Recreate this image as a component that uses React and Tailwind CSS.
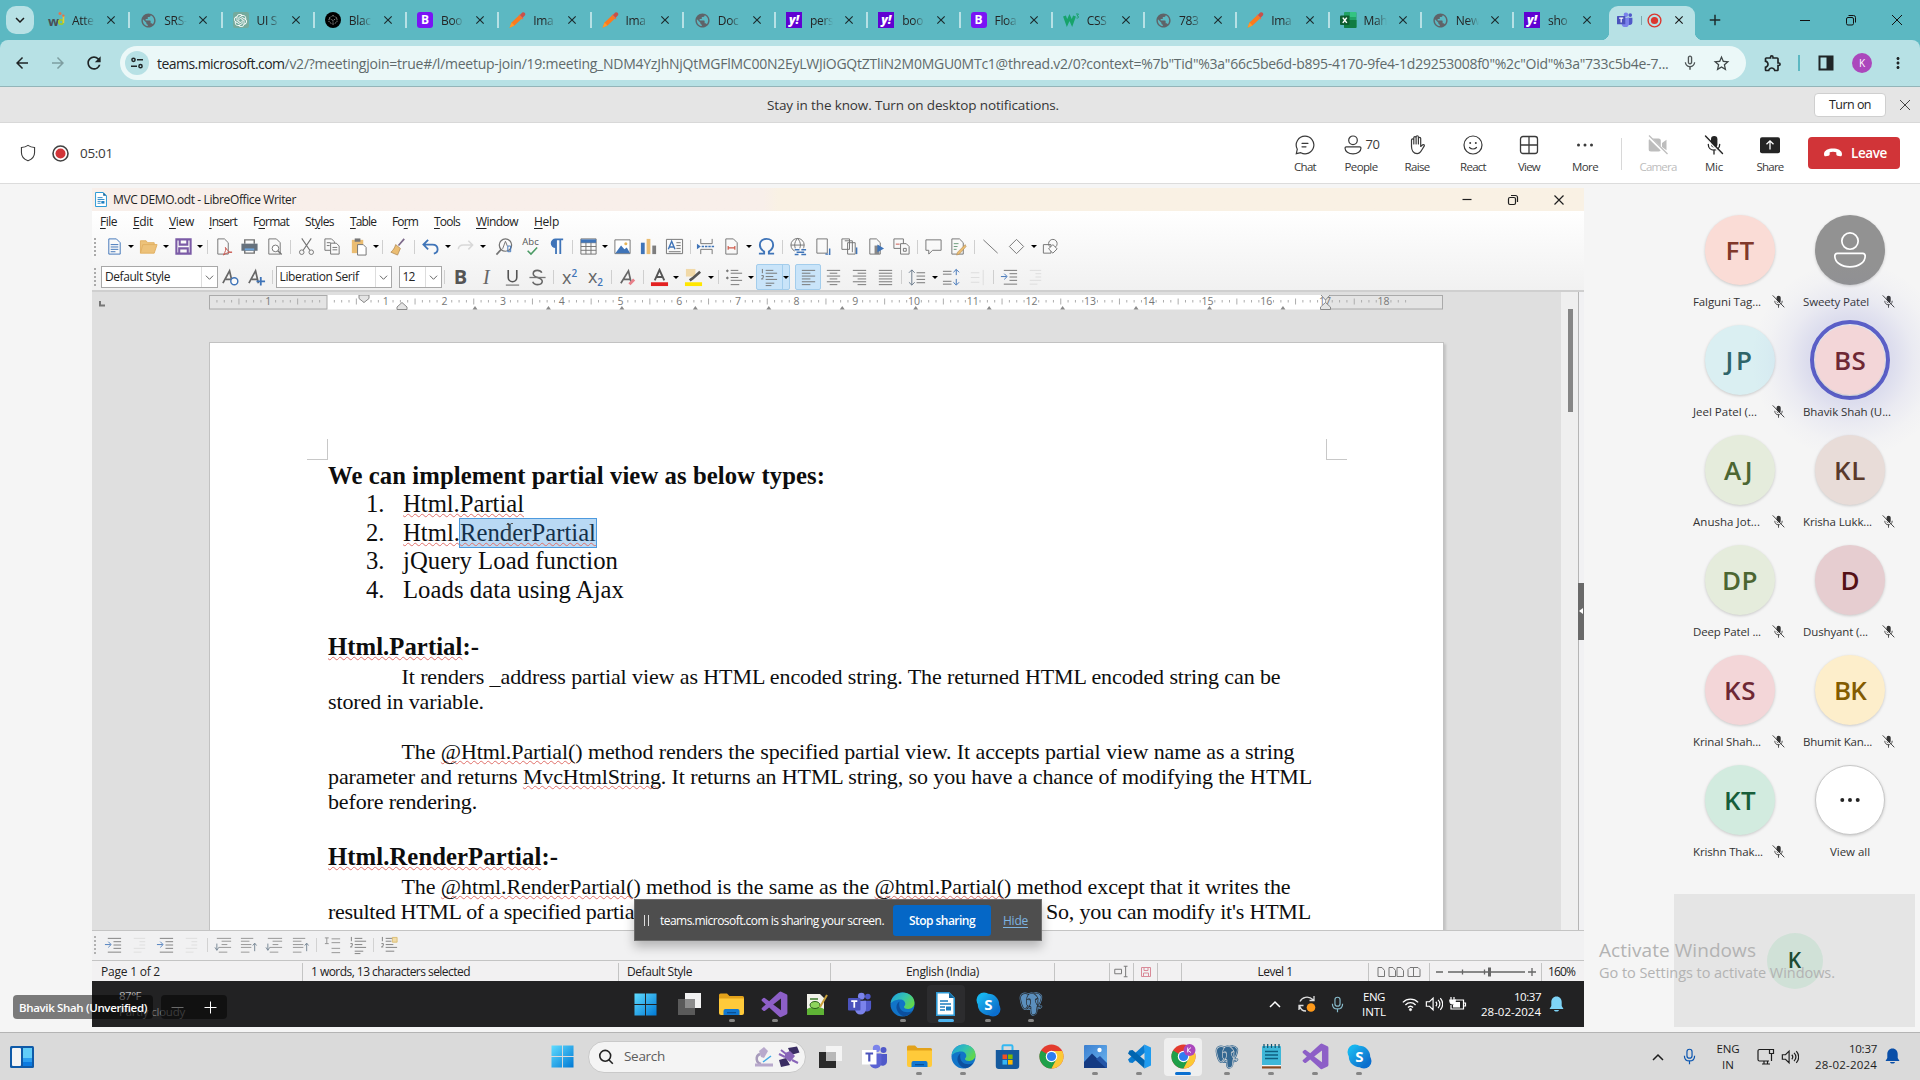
import React, { useLayoutEffect, useRef, useState } from "react";
import {
  MdPublic, MdArrowBack, MdArrowForward, MdRefresh, MdMicNone, MdStarOutline, MdOutlineExtension,
  MdMoreVert, MdClose, MdAdd, MdKeyboardArrowDown,
} from "react-icons/md";
import { BiLogoPostgresql, BiLogoVisualStudio } from "react-icons/bi";
import { SiOpenai } from "react-icons/si";

/* Spreads a run of text over a given width by adjusting its tracking. */
function Fit({ w, className = "", children }) {
  const ref = useRef(null);
  const [ls, setLs] = useState(null);
  useLayoutEffect(() => {
    const el = ref.current;
    const n = el.textContent.length || 1;
    setLs((w - el.getBoundingClientRect().width) / n);
  }, [w]);
  return (
    <span ref={ref} className={"inline-block whitespace-pre " + className} style={ls === null ? undefined : { letterSpacing: ls + "px" }}>
      {children}
    </span>
  );
}

const Svg = ({ s = 20, vb = "0 0 20 20", className = "", children }) => (
  <svg width={s} height={s} viewBox={vb} fill="none" stroke="currentColor" className={"shrink-0 " + className}>{children}</svg>
);

/* ---------- favicons ---------- */
const Globe = () => <MdPublic className="h-[17px] w-[17px] text-[#5f6368]" />;
const Wd = () => (
  <span className="relative flex h-4 w-4 items-end font-bold leading-none">
    <span className="text-[13px] text-[#4a4f55]">w</span>
    <svg className="absolute -top-px left-[9px]" width="8" height="16" viewBox="0 0 8 16" fill="none">
      <circle cx="4" cy="11" r="2.2" stroke="#9acd32" strokeWidth="1.8" />
      <path d="M6.5 5v7" stroke="#e8c83a" strokeWidth="1.6" />
      <circle cx="3" cy="2.5" r="1.5" fill="#e8734a" /><circle cx="6.3" cy="4.6" r="1.2" fill="#e8734a" />
    </svg>
  </span>
);
const Gpt = () => <span className="flex h-4 w-4 items-center justify-center rounded-[2px] bg-[#74aa9c]"><SiOpenai className="h-[13px] w-[13px] text-white" /></span>;
const Black = () => (
  <span className="flex h-4 w-4 items-center justify-center rounded-full bg-black">
    <svg width="10" height="10" viewBox="0 0 10 10" fill="none" stroke="#999" strokeWidth="1" strokeDasharray="1 1"><path d="M5 .5 9 3v4L5 9.500 1 7V3zM1 3l4 2.500L9 3M5 5.500v4" /></svg>
  </span>
);
const Boot = () => <span className="flex h-4 w-4 items-center justify-center rounded-[3px] bg-[#7a14f5] text-[12px] font-bold leading-none text-white">B</span>;
const Pencil = () => (
  <svg width="17" height="16" viewBox="0 0 17 16"><path d="M.500 15.800 2.500 10.500 11 2.500l3 3L5.500 13.500z" fill="#fb7a1e" /><path d="m2.500 10.500 3 3-5 2.300z" fill="#ff9a2a" /><path d="m10.500 3.500 2.700 2.700 2.800-3a2 2 0 0 0-2.800-2.700z" fill="#c8504a" /><path d="M10 3l4 4" stroke="#e8734a" strokeWidth="1.300" /></svg>
);
const Yahoo = () => <span className="flex h-4 w-4 items-center justify-center bg-[#6001d2] text-[12px] font-extrabold italic leading-none text-white">y!</span>;
const W3 = () => (
  <svg width="17" height="16" viewBox="0 0 17 16" fill="none" stroke="#17a36b"><path d="M1.500 4l2.500 7L6.500 5.500 9 11l2.500-7" strokeWidth="3" /><path d="M13 2h2.500L14 4c2.500 0 2 2.500-.5 2" strokeWidth="1" /></svg>
);
const Excel = () => (
  <svg width="17" height="16" viewBox="0 0 17 16"><rect x="4" y="0" width="12.500" height="16" rx="1" fill="#21a366" /><path d="M4 8h12.500v7a1 1 0 0 1-1 1H5a1 1 0 0 1-1-1z" fill="#107c41" /><path d="M10 0h6v5h-6z" fill="#33c481" /><rect x="0" y="3.500" width="9.500" height="9.500" rx="1" fill="#0e5c2f" /><path d="m2.800 5.600 4 5.300m0-5.300-4 5.300" stroke="#fff" strokeWidth="1.500" /></svg>
);

const tabs = [
  [Wd, "Atte"], [Globe, "SRS-"], [Gpt, "UI S"], [Black, "Blac"], [Boot, "Boo"], [Pencil, "Ima"], [Pencil, "Ima"], [Globe, "Doc"],
  [Yahoo, "pers"], [Yahoo, "boo"], [Boot, "Floa"], [W3, "CSS"], [Globe, "783"], [Pencil, "Ima"], [Excel, "Mah"], [Globe, "New"], [Yahoo, "sho"],
];

/* ---------- application icons ---------- */
const WinLogo = ({ s = 24 }) => (
  <svg width={s} height={s} viewBox="0 0 24 24"><defs><linearGradient id="win" x1="0" y1="0" x2="1" y2="1"><stop offset="0" stopColor="#5fdcff" /><stop offset="1" stopColor="#0078d4" /></linearGradient></defs><path d="M.5.500h11v11H.500zM12.500.500h11v11h-11zM.500 12.500h11v11H.500zM12.500 12.500h11v11h-11z" fill="url(#win)" /></svg>
);
const TaskView = ({ dark }) => (
  <svg width="24" height="24" viewBox="0 0 24 24"><rect x="8" y="1" width="16" height="15" fill={dark ? "#f2f2f2" : "#f4f4f4"} /><rect x="1" y="7" width="17" height="16" fill={dark ? "#5a5a5a" : "#2a2a2a"} /><path d="M8 7h10v9H8z" fill={dark ? "#8c8c8c" : "#b8b8b8"} /></svg>
);
const TeamsLogo = ({ s = 26 }) => (
  <svg width={s} height={s} viewBox="0 0 26 26"><circle cx="21.500" cy="5" r="3" fill="#5059c9" /><circle cx="14.500" cy="4.500" r="3.700" fill="#7b83eb" /><path d="M17 9.500h8v7a4.500 4.500 0 0 1-8 3z" fill="#5059c9" /><path d="M7.500 9.500h12v9a6 6 0 0 1-12 0z" fill="#7b83eb" /><rect x="0" y="6.500" width="13.500" height="13.500" rx="1" fill="#4b53bc" /><path d="M3.500 10h6.600M6.800 10v7" stroke="#fff" strokeWidth="1.900" /></svg>
);
const TeamsWhite = () => (
  <svg width="26" height="26" viewBox="0 0 26 26"><circle cx="21.500" cy="6" r="3" fill="#5059c9" /><circle cx="14.500" cy="4.500" r="3.700" fill="#7b83eb" /><path d="M17 10h8v7a4.500 4.500 0 0 1-8 3z" fill="#5059c9" /><path d="M7.500 9.500h12v9a6 6 0 0 1-12 0z" fill="#5b63d3" /><rect x="0" y="6" width="14.500" height="14.500" fill="#fff" /><path d="M3.500 9.500h7.600M7.300 9.500v8" stroke="#4b53bc" strokeWidth="2.200" /></svg>
);
const Explorer = () => (
  <svg width="25" height="25" viewBox="0 0 25 25"><path d="M0 3a1.500 1.500 0 0 1 1.500-1.500H8l2.500 2.500H23.500a1.500 1.500 0 0 1 1.500 1.500V9H0z" fill="#e3a21a" /><path d="M0 6.500h25V21a2 2 0 0 1-2 2H2a2 2 0 0 1-2-2z" fill="#ffca3a" /><path d="M4.500 23v-4a2 2 0 0 1 2-2h12a2 2 0 0 1 2 2v4z" fill="#1177d1" /><path d="M8 20h9v1.300H8z" fill="#0a4f94" /></svg>
);
const Edge = () => (
  <svg width="25" height="25" viewBox="0 0 25 25"><defs><linearGradient id="e1" x1="0" y1="0" x2="1" y2=".6"><stop offset="0" stopColor="#1b9de2" /><stop offset=".55" stopColor="#35c3b0" /><stop offset="1" stopColor="#62d84a" /></linearGradient></defs><circle cx="12.500" cy="12.500" r="12" fill="#1174c8" /><path d="M.6 11.500C1.500 4.800 6.600.500 12.600.500c6.700 0 11.900 4.800 11.900 10.300 0 4-3 6.200-6.300 6.200-2.600 0-4.200-.9-4.200-2 0-1 1.300-1.300 1.300-3.200 0-2.300-2.100-4.300-5.200-4.300-4.500 0-8.300 2.300-9.500 4z" fill="url(#e1)" /><path d="M9.500 9.500c-3 2-3.800 5.500-2.300 9 1.300 3.200 4.200 5.400 7.300 5.700 3.500-.6 6-2.700 7.700-5.300-3.700 2-8.500 1.500-11-1-2-2-2.500-5.500-1.700-8.400z" fill="#0c4f9e" /></svg>
);
const Store = () => (
  <svg width="25" height="26" viewBox="0 0 25 26"><path d="M7.500 7V2.500a1.200 1.200 0 0 1 1.200-1.200h7.600a1.200 1.200 0 0 1 1.200 1.200V7" fill="none" stroke="#33b8f2" strokeWidth="2" /><path d="M.8 6h23.400v16a3 3 0 0 1-3 3H3.800a3 3 0 0 1-3-3z" fill="#155a9e" /><path d="M7.500 10.500h4.600v4.600H7.500z" fill="#f25022" /><path d="M13 10.500h4.600v4.600H13z" fill="#7fba00" /><path d="M7.500 16h4.600v4.600H7.500z" fill="#35b6f5" /><path d="M13 16h4.600v4.600H13z" fill="#ffb900" /></svg>
);
const Chrome = ({ badge }) => (
  <svg width="25" height="25" viewBox="0 0 25 25"><circle cx="12.500" cy="12.500" r="12" fill="#e33b2e" /><path d="M12.500 12.500 2.100 6.500A12 12 0 0 0 12.500 24.500l5.300-9z" fill="#1fa049" /><path d="M12.500 7h10.700A12 12 0 0 1 12.500 24.500l5-9.500z" fill="#fcc934" /><circle cx="12.500" cy="12.500" r="5.700" fill="#fff" /><circle cx="12.500" cy="12.500" r="4.600" fill="#2f7df0" />{badge && <><circle cx="18.500" cy="6" r="6" fill="#ab47bc" /><path d="M16.700 3.500v5M20 3.500l-3.200 2.800L20 8.500" stroke="#fff" strokeWidth=".9" fill="none" /></>}</svg>
);
const Photos = () => (
  <svg width="23" height="23" viewBox="0 0 23 23"><defs><linearGradient id="ph" x1="0" y1="0" x2="1" y2="1"><stop offset="0" stopColor="#3b7fd0" /><stop offset="1" stopColor="#6cb6f0" /></linearGradient></defs><rect width="23" height="23" rx="1" fill="url(#ph)" /><path d="M0 17 8 8.500l15 14.500H0z" fill="#143a82" /><path d="m12 14 4-3 7 7v5h-1z" fill="#2456a8" /><circle cx="15.500" cy="5" r="2.200" fill="#fff" /></svg>
);
const VSCode = () => (
  <svg width="25" height="25" viewBox="0 0 25 25"><path d="M17.500.500 1 15.500l1.500 3 3 .5L18 8.500z" fill="#0a7bd0" /><path d="M17.500 24.500 1 9.500l1.500-3 3-.5L18 16.500z" fill="#0065b0" /><path d="M17.500.500 24 3.500v18l-6.500 3z" fill="#1f9cf0" /></svg>
);
const VS = () => <BiLogoVisualStudio className="h-[31px] w-[31px] text-[#8d5fc7]" />;
const Pg = ({ light }) => <BiLogoPostgresql className={"h-[28px] w-[28px] " + (light ? "text-[#5b8fbd]" : "text-[#336791]")} />;
const Notepad = () => (
  <svg width="21" height="25" viewBox="0 0 21 25"><rect x="1" y="2" width="19" height="20" rx="1" fill="#3fb7d8" /><path d="M1 22h19v2.500H1z" fill="#8a4a20" /><path d="M1 21h19v1.300H1z" fill="#f4f4f4" /><path d="M4 7.500h13M4 11h13M4 14.500h13" stroke="#0f5f80" strokeWidth="1.300" /><path d="M3 0v4m3.700-4v4m3.800-4v4m3.700-4v4M18 0v4" stroke="#0f4f6c" strokeWidth="1.200" /></svg>
);
const Skype = () => (
  <svg width="25" height="25" viewBox="0 0 25 25"><defs><linearGradient id="sk" x1="0" y1="0" x2="1" y2="1"><stop offset="0" stopColor="#1cc0f5" /><stop offset="1" stopColor="#0a5fc4" /></linearGradient></defs><circle cx="8" cy="8" r="7.500" fill="#15b5ef" /><circle cx="17" cy="17" r="7.500" fill="#0a6fd0" /><circle cx="12.500" cy="12.500" r="10.700" fill="url(#sk)" /><text x="12.500" y="18" textAnchor="middle" fontSize="15" fontWeight="700" fontFamily="Open Sans, sans-serif" fill="#fff">S</text></svg>
);
const Npp = () => (
  <svg width="22" height="24" viewBox="0 0 22 24"><path d="M1 2h13l4 4v17H1z" fill="#f2f2ea" /><path d="M1 17c5-3 12-3 17 0v6H1z" fill="#5fb336" /><path d="M4 7h8" stroke="#3d7a2a" strokeWidth="1.500" /><ellipse cx="9" cy="13" rx="5" ry="3.500" fill="#8ed45e" stroke="#2c5f1c" /><path d="M21 3 14 15" stroke="#c9a13b" strokeWidth="2" /></svg>
);
const WriterIcon = ({ w = 19, h = 24 }) => (
  <svg width={w} height={h} viewBox="0 0 19 24"><path d="M.800.800H13L18.200 6v17.200H.800z" fill="#fff" stroke="#2d9ad6" strokeWidth="1.600" /><path d="M13 .800 18.200 6H13z" fill="#14679e" /><path d="M4 9h8M4 12h11M4 15h5M4 18h5" stroke="#1c7dbf" strokeWidth="1.400" /><path d="M10 14.500h5v4h-5z" fill="#1c7dbf" /></svg>
);

/* ---------- Teams icons ---------- */
const ChatI = () => <Svg><path d="M10 1.200a8.800 8.800 0 1 1-4.200 16.500L1.300 18.700l1-4.500A8.800 8.800 0 0 1 10 1.200zM7 8.300h6M7 11.800h4" strokeWidth="1.200" strokeLinecap="round" /></Svg>;
const PeopleI = ({ s = 20, sw = 1.2 }) => <Svg s={s}><circle cx="10" cy="5.300" r="4.300" strokeWidth={sw} /><path d="M3.300 11.800h13.400A1.400 1.400 0 0 1 18 13.100c0 3.300-3.500 5.800-8 5.800s-8-2.500-8-5.800a1.400 1.400 0 0 1 1.300-1.300z" strokeWidth={sw} /></Svg>;
const HandI = () => <Svg><path d="M4.500 11.500V5a1.100 1.100 0 0 1 2.300 0v4V2.700a1.100 1.100 0 0 1 2.300 0V9 1.900a1.100 1.100 0 0 1 2.300 0V9 3.500a1.100 1.100 0 0 1 2.300 0v8l2-1.700c.9-.6 2 .2 1.600 1.100-1.300 2-2.500 4.300-3.800 6a4.300 4.300 0 0 1-3.300 1.700C6.600 18.600 4.500 15.500 4.500 11.500z" strokeWidth="1.200" strokeLinejoin="round" /></Svg>;
const SmileI = () => <Svg><circle cx="10" cy="10" r="9" strokeWidth="1.200" /><path d="M6.500 12.500c1.800 2 5.200 2 7 0" strokeWidth="1.200" strokeLinecap="round" /><circle cx="7.200" cy="8" r="1" fill="currentColor" stroke="none" /><circle cx="12.800" cy="8" r="1" fill="currentColor" stroke="none" /></Svg>;
const GridI = () => <Svg><rect x="1.500" y="1.500" width="17" height="17" rx="2.500" strokeWidth="1.300" /><path d="M10 2v16M2 10h16" strokeWidth="1.300" /></Svg>;
const DotsI = () => <Svg><g fill="currentColor" stroke="none"><circle cx="3.500" cy="10" r="1.500" /><circle cx="10" cy="10" r="1.500" /><circle cx="16.500" cy="10" r="1.500" /></g></Svg>;
const CamI = () => <Svg><path d="M3 3.500h7.500A2.300 2.300 0 0 1 12.800 6v8a2.300 2.300 0 0 1-2.300 2.500H3A2.300 2.300 0 0 1 .700 14V6A2.300 2.300 0 0 1 3 3.500zM14 8l4.500-3.300v10.600L14 12z" fill="currentColor" stroke="none" /><path d="M0 1l18.500 18" stroke="#fff" strokeWidth="3" /><path d="M1 .500 19.500 19" strokeWidth="1.200" /></Svg>;
const MicOffI = ({ s = 20 }) => <Svg s={s}><rect x="7" y="1" width="6.400" height="11.500" rx="3.200" fill="currentColor" stroke="none" /><path d="M4.300 9.500c0 3.400 2.500 5.600 5.700 5.600s5.700-2.200 5.700-5.600M10 15v4" strokeWidth="1.300" strokeLinecap="round" /><path d="M1 2.500 17 19" stroke="#f8f8f8" strokeWidth="1.500" /><path d="M1.500 1 18.500 18.500" strokeWidth="1.400" strokeLinecap="round" /></Svg>;
const ShareI = () => <Svg><rect x="0" y="2.200" width="20" height="16" rx="2" fill="currentColor" stroke="none" /><path d="M10 14.500V6M6.500 9.300 10 5.800l3.500 3.500" stroke="#fff" strokeWidth="1.300" /></Svg>;

const actions = [
  [ChatI, "Chat", 22], [PeopleI, "People", 33], [HandI, "Raise", 25], [SmileI, "React", 26], [GridI, "View", 22], [DotsI, "More", 26],
];

/* ---------- Writer toolbar icons ---------- */
const G = "#747474";
const B = "#3f74b8";
const lines = (rows) => rows.map(([x1, x2, y], i) => <path key={i} d={`M${x1} ${y}H${x2}`} />);
const ic = {
  new: <><path d="M4 2h8l4 4v12H4z" stroke={B} /><path d="M6 8h8M6 10.500h8M6 13h8M6 15.500h5" stroke={B} /></>,
  open: <path d="M1.500 17 4 8h15l-3 9zM1.500 17V4h6l1.500 2h7v2" fill="#edc27a" stroke="#e2b062" />,
  save: <path d="M2.500 2.500h15v15h-15zM6 2.500V8h8V2.500M5.500 17.500V12h9v5.500" stroke="#7b5ba6" strokeWidth="2.200" />,
  pdf: <><path d="M4 2h7l4 4v12H4z" stroke={G} /><path d="M10 19c2-4 3-6 2-8 3 5 5 5 7 5-3 0-7 1-9 3z" stroke="#c9524a" /></>,
  print: <><path d="M5 7V3h10v4M5 14v3h10v-3" stroke={G} strokeWidth="1.500" /><path d="M1.500 7h17v7.500h-17z" fill="#66717c" stroke="none" /><path d="M5 13h10" stroke="#6ba3dc" strokeWidth="2" /></>,
  preview: <><path d="M4 2h8l4 4v12H4z" stroke={G} /><circle cx="11" cy="12" r="3.500" stroke={G} fill="#fff" /><path d="m13.500 14.500 4 4" stroke={G} strokeWidth="1.500" /></>,
  cut: <><path d="M5 1.500 13.500 14M15 1.500 6.500 14" stroke={G} strokeWidth="1.200" /><circle cx="5" cy="16" r="2.400" stroke={G} /><circle cx="15" cy="16" r="2.400" stroke={G} /></>,
  copy: <><path d="M2 2h7l3 3v9H2z" stroke={G} /><path d="M8 6.500h6l3 3V18H8z" fill="#fafafa" stroke={G} /><path d="M10 11h5M10 13.500h5M4 6h4M4 9h3" stroke={G} /></>,
  paste: <><path d="M3 3h12v14H3z" fill="#ebbd72" stroke="none" /><path d="M6 1.500h6V5H6z" fill="#777" stroke="none" /><path d="M9 8h6l3 3v8H9z" fill="#fff" stroke={G} /></>,
  brush: <><path d="m16 2-6 7" stroke="#7d6a8a" strokeWidth="1.800" /><path d="m7 8 5 4-3 7-7-3c2-2 4-4 5-8z" fill="#ebbd72" stroke="#b08a55" strokeWidth=".8" /></>,
  undo: <path d="M7.500 3 2.500 8l5 5M3 8h9c4 0 5.500 2.500 5.500 5s-1.500 4-4 4.500" stroke={B} strokeWidth="1.900" />,
  redo: <path d="m13 4 4.500 4.500L13 13M17 8.500H8c-4 0-5.500 2-5.500 4.500" stroke="#d8d8d8" strokeWidth="1.600" />,
  find: <><circle cx="11" cy="8.500" r="6.500" stroke={G} strokeWidth="1.300" /><path d="m6.500 13-5 5.500" stroke={G} strokeWidth="1.800" /><path d="M8 12.500 11 4.500l2 5" stroke={G} /><path d="M13.500 9.500h3v6h-3z" stroke={B} /></>,
  abc: <><text x="10" y="8.500" textAnchor="middle" fontSize="10" fontFamily="Open Sans, sans-serif" fill="#555" stroke="none">Abc</text><path d="m7 14.500 3.500 3.500L17 11" stroke="#4a9a64" strokeWidth="1.600" /></>,
  para: <path d="M9.500 18V2.500M14 18V2.500M9 2.500h8M9 2.500a4 4 0 0 0 0 8.200z" stroke={B} strokeWidth="1.900" fill={B} />,
  table: <><path d="M2 2h16v16H2zM2 6h16M2 10h16M2 14h16M7.300 4v14M12.600 4v14" stroke={G} /><path d="M2 2.500h16V6H2z" fill={B} stroke="none" /></>,
  image: <><path d="M2 3h16v14.500H2z" fill="#fff" stroke={G} /><path d="m2.500 17 6-8 3.500 4 2.500-2 3.500 6z" fill={B} stroke="none" /><circle cx="13.500" cy="7" r="1.600" fill="#e9b558" stroke="none" /></>,
  chart: <><path d="M2 6h4v12H2z" fill={B} stroke="none" /><path d="M8 2h4v16H8z" fill="#ebbd72" stroke="none" /><path d="M14 9h4v9h-4z" fill="#7d7d7d" stroke="none" /></>,
  tbox: <><path d="M1.500 2.500h17v15h-17z" stroke={G} /><path d="M3.500 13 7 4.500 10.500 13M5 10.500h4" stroke={B} strokeWidth="1.500" /><path d="M12 6h4.500M12 9h4.500M12 12h4.500M4 15.500h12.500" stroke={G} /></>,
  pbreak: <><path d="M5 2v5h12V2M5 18v-5h12v5" stroke={G} /><path d="M6 10h13" stroke={B} strokeWidth="1.500" strokeDasharray="2.500 1" /><path d="m1 7 4 3-4 3z" fill={B} stroke="none" /></>,
  field: <><path d="M4 2h8l4 4v12H4z" stroke={G} /><path d="M6.500 9.500v4M13.500 9.500v4M7 11.500h6" stroke="#d05a4a" strokeWidth="1.200" /></>,
  omega: <path d="M2 17.500h5.500v-2.200C4.500 13.500 3 11.500 3 8.500 3 4.500 6 2 10 2s7 2.500 7 6.500c0 3-1.500 5-4.500 6.800v2.200H18" stroke={B} strokeWidth="2" />,
  link: <><circle cx="9" cy="8.500" r="7" stroke={G} /><path d="M2 8.500h14M9 1.500c-4 4-4 10 0 14M9 1.500c4 4 4 10 0 14" stroke={G} /><path d="M6 12h13v7H6z" fill="#fafafa" stroke="none" /><path d="M6 13.500h5m2 0h5M8 16h8M6 18.500h4m3 0h5" stroke={B} strokeWidth="1.600" /></>,
  foot: <><path d="M3 2h11v15H3z" stroke={G} /><path d="M16.500 12v7M12 18h3" stroke={B} strokeWidth="1.500" /></>,
  end: <><path d="M2 2h8v11H2zM5 4h8v12M8 6h8v12H8V6z" stroke={G} fill="#fbfbfb" /><path d="M17.500 11v7" stroke={B} strokeWidth="1.500" /></>,
  bmark: <><path d="M4 2h7l4 4v12H4z" stroke={G} /><path d="M9 9h5v9H9z" fill="#888" stroke="none" /><path d="m12 8 7 4-7 4z" fill={B} stroke="none" /></>,
  xref: <><path d="M2 2h10v10H2z" stroke={G} /><path d="M9 7h6l3 3v8H9z" fill="#fafafa" stroke={G} /><path d="M4 7.500h4" stroke="#c9524a" /><path d="M12 12h3v3h-3z" stroke={G} /></>,
  comment: <path d="M2 3h16v11h-9l-4 4v-4H2z" stroke={G} />,
  track: <><path d="M3 2h8l4 4v12H3z" stroke={G} /><path d="M5 7h5M5 10h4M5 13h3" stroke="#6a9a7a" /><path d="M17 8 9 16l-1 3 3-1 7-8z" fill="#ebbd72" stroke="#b08a55" strokeWidth=".6" /></>,
  line: <path d="m2.500 3 15 14" stroke={G} />,
  diamond: <path d="m10 2.500 7.500 7.500-7.500 7.500L2.500 10z" stroke={G} />,
  shapes: <><circle cx="12.500" cy="7" r="4.500" stroke={G} /><path d="M2.500 8h8v9h-8z" stroke={G} /><path d="m12.500 8 4.500 4.500-4.500 4.500L8 12.500z" fill="#fafafa" stroke={G} /></>,
  Aupd: <><path d="M2 16 9 3l3 13M5 12h6.500" stroke="#666" strokeWidth="1.800" /><circle cx="14" cy="14" r="3.700" stroke={B} strokeWidth="1.500" fill="#fafafa" /></>,
  Aplus: <><path d="M2 16 9 3l3 13M5 12h6.500" stroke="#666" strokeWidth="1.800" /><path d="M14.500 9.500v9M10 14h9" stroke={B} strokeWidth="1.900" /></>,
  under: <><path d="M5.500 2v8a4.500 4.500 0 0 0 9 0V2" stroke="#555" strokeWidth="1.700" /><path d="M3 18h14" stroke="#888" strokeWidth="1.400" /></>,
  strike: <><path d="M14.500 5c-1-2-3-2.500-4.700-2.500C7 2.500 5.500 4 5.500 6c0 5 9.500 3 9.500 8 0 2.200-2 3.500-4.800 3.500-2.700 0-4.500-1-5.200-3" stroke="#666" strokeWidth="1.600" /><path d="M1.500 10h17" stroke="#777" strokeWidth="1.400" /></>,
  Aclear: <><path d="M3 16 11 3l3 13M6 12h7.500" stroke="#666" strokeWidth="1.800" /><path d="m12 17 5-5" stroke="#e8808a" strokeWidth="3" /></>,
  Acol: <><path d="M5 13 10 2l5 11M7 9.500h6" stroke="#555" strokeWidth="2" /><path d="M1 15h18v4H1z" fill="#e32020" stroke="none" /></>,
  hl: <><path d="M2 1h10v8H2z" fill="#f1d9a8" stroke="none" /><path d="m17 4-8 7-3 2" stroke="#555" strokeWidth="2.800" /><path d="M1 15h18v4H1z" fill="#ffe600" stroke="none" /></>,
  bul: <g stroke={G}>{lines([[6, 14, 2.5], [6, 18, 5.5], [6, 14, 10], [6, 18, 13], [6, 15, 17.5]])}<circle cx="2.500" cy="3" r=".9" fill={G} /><circle cx="2.500" cy="10.500" r=".9" fill={G} /></g>,
  num: <g stroke={G}>{lines([[6, 14, 2.5], [6, 18, 5.5], [6, 14, 9], [6, 18, 12], [6, 15, 16], [6, 12, 18.5]])}<path d="M2.500 1v4.500M1.500 8h2v2l-2 1.500h2" /></g>,
  left: <g stroke={G}>{lines([[3, 17, 2.5], [3, 12, 5.5], [3, 17, 8.5], [3, 12, 11.5], [3, 17, 14.5], [3, 12, 17.5]])}</g>,
  center: <g stroke={G}>{lines([[3, 17, 2.5], [6, 14, 5.5], [3, 17, 8.5], [6, 14, 11.5], [3, 17, 14.5], [6, 14, 17.5]])}</g>,
  right: <g stroke={G}>{lines([[3, 17, 2.5], [8, 17, 5.5], [3, 17, 8.5], [8, 17, 11.5], [3, 17, 14.5], [8, 17, 17.5]])}</g>,
  just: <g stroke={G}>{lines([[3, 17, 2.5], [3, 17, 5.5], [3, 17, 8.5], [3, 17, 11.5], [3, 17, 14.5], [3, 17, 17.5]])}</g>,
  lsp: <g stroke={G}>{lines([[9, 18, 5], [9, 18, 8.500], [9, 18, 12], [9, 18, 15.500]])}<path d="M4 2v16M1 5l3-3 3 3M1 15l3 3 3-3" stroke="#667788" /></g>,
  psp: <g stroke={G}>{lines([[1, 10, 3.500], [1, 10, 6.500], [1, 10, 14], [1, 10, 17]])}<path d="M15 1.500v6M12 4.500l3-3 3 3M15 11.500v6M12 15l3 3 3-3" stroke={B} /></g>,
  pspd: <g stroke="#dcdcdc">{lines([[3, 12, 5], [3, 12, 10], [3, 12, 15]])}<path d="M16 2v16" /></g>,
  ind: <g stroke={G}>{lines([[4, 18, 2.5], [10, 18, 6], [10, 18, 9.5], [10, 18, 13], [4, 18, 17]])}<path d="M1 9h6M4.500 6l3 3-3 3" stroke={B} /></g>,
  indd: <g stroke="#dcdcdc">{lines([[4, 16, 2.5], [10, 16, 6], [10, 16, 9.5], [4, 16, 13], [4, 12, 17]])}</g>,
  mv: <g stroke="#8a8a8a">{lines([[3, 18, 2.5], [8, 18, 5.5], [8, 14, 9], [5, 18, 12], [5, 14, 17]])}<path d="M3 8v7M1 12l2 3 2-3" stroke="#6c7c8c" /></g>,
  mvu: <g stroke="#8a8a8a">{lines([[2, 15, 2.5], [2, 11, 5.5], [2, 13, 9], [2, 13, 12], [2, 11, 17]])}<path d="M16.500 16V8M14.500 10l2-2.500 2 2.500" stroke="#6c7c8c" /></g>,
  tl: <g stroke="#8a8a8a">{lines([[9, 18, 3], [9, 18, 7], [9, 18, 13], [9, 18, 17.5]])}<path d="M4 2v6M2 2h4M2 8h4" /></g>,
  numnew: <g stroke={G}>{lines([[6, 14, 2.5], [6, 12, 5.5], [6, 14, 9], [6, 18, 12], [6, 15, 16]])}<path d="M2.500 1v4.500M1.500 8h2v2l-2 1.500h2" /><path d="M13 1.500h5v5h-5z" fill="#f0d9a0" stroke="#d9b868" /></g>,
};
const Tool = ({ n, drop, on, node }) => (
  <div className={"flex h-[26px] shrink-0 items-center " + (drop ? "w-[34.500px]" : "w-[25.800px] justify-center") + (on ? " rounded-[2px] border border-[#a3cdec] bg-[#c9e4f9]" : "")}>
    <div className={"flex items-center justify-center " + (drop ? "w-[26px]" : "")}>{node || <Svg s={19}>{ic[n]}</Svg>}</div>
    {drop && <div className={"flex h-full flex-1 items-center justify-center " + (on ? "border-l border-[#a3cdec]" : "")}><i className="border-x-[3px] border-t-[3px] border-x-transparent border-t-black" /></div>}
  </div>
);
const Sep = () => <div className="flex w-[6px] shrink-0 justify-center"><i className="h-[14px] w-px bg-[#cfcfcf]" /></div>;
const toolbar1 = ["new+", "open+", "save+", "|", "pdf", "print", "preview", "|", "cut", "copy", "paste+", "|", "brush", "|", "undo+", "redo+", " ", "find", "abc", "para", "|", "table+", "image", "chart", "tbox", "|", "pbreak", "field+", "omega", "|", "link", "foot", "end", "bmark", "xref", "|", "comment", "track", "|", "line", "diamond+", "shapes"];
const renderTools = (list) => list.map((t, i) => t === "|" ? <Sep key={i} /> : t === " " ? <div key={i} className="w-[5px]" /> : <Tool key={i} n={t.replace(/[+*]/g, "")} drop={t.includes("+")} on={t.includes("*")} />);
const Combo = ({ w, tw, children }) => (
  <div className={"flex h-[22px] shrink-0 items-center border border-[#a8a8a8] bg-white " + w}>
    <Fit w={tw} className="pl-[3px] text-[12px]">{children}</Fit>
    <div className="ml-auto flex h-full w-[16px] items-center justify-center border-l border-[#ddd]"><Svg s={9} vb="0 0 10 10" className="text-[#555]"><path d="m1 3 4 4 4-4" /></Svg></div>
  </div>
);

const menus = [["File", 17, "w-[33px]"], ["Edit", 20, "w-[36px]"], ["View", 25, "w-[40px]"], ["Insert", 28, "w-[44px]"], ["Format", 36, "w-[52px]", 1], ["Styles", 29, "w-[45px]", 2], ["Table", 26, "w-[42px]"], ["Form", 26, "w-[42px]", 2], ["Tools", 26, "w-[42px]"], ["Window", 42, "w-[58px]"], ["Help", 25, "w-[40px]"]];

function Ruler() {
  const U = 58.7;
  const z = 118;
  const ticks = [];
  for (let k = -15; k <= 147; k++) {
    if (k % 8 === 0) continue;
    const x = z + (k * U) / 8;
    ticks.push(<path key={k} d={`M${x} ${k % 4 === 0 ? 3.5 : 5}V${k % 4 === 0 ? 9.5 : 7.500}`} stroke="#adadad" />);
  }
  const nums = [];
  for (let k = -1; k <= 18; k++) if (k) nums.push(<text key={k} x={z + k * U} y="10" textAnchor="middle" fontSize="10.500" fill="#777">{Math.abs(k)}</text>);
  const marks = [];
  for (let k = 0; k < 12; k++) marks.push(<path key={k} d={`M${266 + k * 73.45 - 2.5} 14.500l2.500-3.500 2.500 3.500z`} fill="#8a8a8a" />);
  return (
    <svg width="1240" height="20" viewBox="0 0 1240 20" className="block font-['Open_Sans',sans-serif]">
      <rect x="118" y="0" width="998" height="14.500" fill="#fff" />
      <rect x=".5" y=".5" width="117.500" height="13.500" fill="#e4e4e4" stroke="#aaa" />
      <rect x="1116.500" y=".5" width="117" height="13.500" fill="#e4e4e4" stroke="#aaa" />
      {ticks}{nums}{marks}
      <path d="M150 0h10v3.500l-5 4-5-4z" fill="#e4e4e4" stroke="#8a8a8a" />
      <path d="M188 14.500h10v-2.500l-5-4.500-5 4.500z" fill="#e4e4e4" stroke="#8a8a8a" />
      <path d="M1111.500 14.500h10v-2.500l-5-4.500-5 4.500zM1112 0l4.500 5 4.500-5" fill="#e4e4e4" stroke="#8a8a8a" />
    </svg>
  );
}

const Sq = ({ children }) => <span className="underline decoration-[#e0706a] decoration-wavy decoration-[0.9px] underline-offset-[1px] [text-decoration-skip-ink:none]">{children}</span>;
const H = ({ w, children }) => <div className="h-[28.600px] text-[24.700px] font-bold leading-[28.600px]"><Fit w={w}>{children}</Fit></div>;
const L = ({ w, ind, children }) => <div className={"h-[25.100px] text-[22px] leading-[25.100px] " + (ind ? "pl-[73.500px]" : "")}><Fit w={w}>{children}</Fit></div>;
const Li = ({ n, children }) => <div className="flex h-[28.600px] pl-[38px] text-[24.700px] leading-[28.600px]"><span className="w-[37px]">{n}.</span>{children}</div>;

const VSep = () => <i className="h-[18px] w-px shrink-0 bg-[#c4c4c4]" />;

const people = [
  ["FT", "bg-[#fadcd6] text-[#80382a]", "Falguni Tag...", 68], ["", "bg-[#929292] text-white", "Sweety Patel", 66],
  ["JP", "bg-[#daeff2] text-[#2f6469]", "Jeel Patel (...", 64], ["BS", "bg-[#f3d6d8] text-[#6e2834]", "Bhavik Shah (U...", 88],
  ["AJ", "bg-[#e5ecdc] text-[#4c6632]", "Anusha Jot...", 67], ["KL", "bg-[#e8dcd8] text-[#5a3a2c]", "Krisha Lukk...", 69],
  ["DP", "bg-[#e5ecdc] text-[#4c6632]", "Deep Patel ...", 68], ["D", "bg-[#e6cdd0] text-[#541016]", "Dushyant (...", 65],
  ["KS", "bg-[#f3d6d8] text-[#6e2834]", "Krinal Shah...", 68], ["BK", "bg-[#fdeecb] text-[#835b00]", "Bhumit Kan...", 69],
  ["KT", "bg-[#d2ebdf] text-[#175e3a]", "Krishn Thak...", 70], ["...", "bg-white border border-[#c8c8c8] text-[#242424]", "View all", 40],
];

const TaskItem = ({ w, children, dot, active, bg }) => (
  <div className={"relative flex h-full shrink-0 items-center justify-center " + w}>
    {bg && <i className={"absolute rounded-[4px] " + bg} />}
    <div className="relative flex">{children}</div>
    {dot && <i className="absolute bottom-[5px] h-[3px] w-[6px] rounded-full bg-[#858585]" />}
    {active && <i className={"absolute bottom-[5px] h-[3px] w-[16px] rounded-full " + active} />}
  </div>
);
const Up = () => <Svg s={12} vb="0 0 12 12"><path d="m1 9 5-5 5 5" strokeWidth="1.500" /></Svg>;
const MicI = () => <Svg s={17}><rect x="7" y="1.500" width="6" height="10.500" rx="3" strokeWidth="1.400" /><path d="M4 9c0 4 2.500 6.200 6 6.200S16 13 16 9M10 15.200V19" strokeWidth="1.400" /></Svg>;
const Vol = () => <Svg s={18}><path d="M1.500 7.500h3.500l4-4v13l-4-4H1.500zM12 7.500c1.300 1.500 1.300 3.500 0 5M14.500 5.500c2.500 2.700 2.500 6.300 0 9M17 3.500c3.300 4 3.300 9 0 13" strokeWidth="1.300" /></Svg>;
const Bell = ({ className }) => <svg width="15" height="17" viewBox="0 0 15 17" className={className}><path d="M7.500.500c3.300 0 5.200 2.500 5.200 5.500v4l1.800 3H.500l1.800-3V6c0-3 1.900-5.500 5.200-5.500zM5 14h5c-.5 2-4.500 2-5 0z" fill="currentColor" /></svg>;

export default function App() {
  return (
    <div className="flex h-[1080px] w-[1920px] flex-col overflow-hidden bg-[#f5f5f5] font-['Open_Sans',sans-serif] text-[#242424]">
      {/* tab strip */}
      <div className="flex h-10 shrink-0 bg-[#5cb8c2]">
        <div className="mt-[6px] ml-[6px] flex h-7 w-7 shrink-0 items-center justify-center rounded-[10px] bg-[#b7e1e5]"><MdKeyboardArrowDown className="h-[18px] w-[18px] text-[#1c1c1c]" /></div>
        <div className="ml-[4px] flex">
          {tabs.map(([Icon, label], i) => (
            <div key={i} className="flex h-10 w-[92.250px] shrink-0 items-center pl-[10px]">
              <div className="flex w-[24px] shrink-0 justify-start"><Icon /></div>
              <div className="w-[23px] shrink-0 pt-px text-[12px] whitespace-nowrap tracking-tight [mask-image:linear-gradient(to_right,black_50%,transparent)]">{label}</div>
              <MdClose className="ml-[9px] h-[14px] w-[14px] shrink-0 text-[#1c2b2d]" />
              <i className={"ml-auto h-4 w-[2px] " + (i < 16 ? "bg-[#b7e1e5]" : "")} />
            </div>
          ))}
        </div>
        <div className="relative mt-[6px] ml-[3px] flex h-[34px] w-[86px] shrink-0 items-center rounded-t-[9px] bg-[#b7e1e5] pb-[6px] pl-2">
          <i className="absolute bottom-0 -left-2 h-2 w-2 bg-[radial-gradient(circle_at_0_0,transparent_8px,#b7e1e5_8.500px)]" />
          <i className="absolute -right-2 bottom-0 h-2 w-2 bg-[radial-gradient(circle_at_100%_0,transparent_8px,#b7e1e5_8.500px)]" />
          <TeamsLogo s={16} />
          <i className="ml-[8px] h-[9px] w-px bg-[#7fa9ad]" />
          <svg className="ml-[5px]" width="15" height="15" viewBox="0 0 15 15"><circle cx="7.500" cy="7.500" r="6.400" fill="none" stroke="#dc362e" strokeWidth="1.400" /><circle cx="7.500" cy="7.500" r="3.600" fill="#dc362e" /></svg>
          <MdClose className="ml-[10px] h-[14px] w-[14px] text-[#1c1c1c]" />
        </div>
        <MdAdd className="mt-[11px] ml-[11px] h-[18px] w-[18px] shrink-0 text-[#1c2b2d]" />
        <div className="ml-auto flex h-10 items-center text-[#111]">
          <Svg s={46} vb="-23 -23 46 46"><path d="M-5 0.500h10" /></Svg>
          <Svg s={46} vb="-23 -23 46 46"><rect x="-4.500" y="-2.500" width="7" height="7.500" rx="1.500" /><path d="M-2.500-4.500h5a2 2 0 0 1 2 2v5" /></Svg>
          <Svg s={46} vb="-23 -23 46 46"><path d="m-5-5 10 10M5-5-5 5" /></Svg>
        </div>
      </div>

      {/* address bar */}
      <div className="flex h-[47px] shrink-0 bg-[#5cb8c2]">
        <div className="flex h-[47px] w-full items-center rounded-t-[8px] border-b border-[#93b5b9] bg-[#b7e1e5] text-[#1f2526]">
          <MdArrowBack className="ml-[13px] h-[18px] w-[18px]" />
          <MdArrowForward className="ml-[18px] h-[18px] w-[18px] text-[#7e9ea1]" />
          <MdRefresh className="ml-[17px] h-[20px] w-[20px]" />
          <div className="ml-[16px] flex h-[34px] w-[1626px] items-center rounded-full bg-[#ebf8f8]">
            <div className="ml-[5px] flex h-6 w-6 items-center justify-center rounded-full bg-[#b7e1e5]">
              <Svg s={14} vb="0 0 14 14"><circle cx="3.500" cy="3.800" r="1.600" strokeWidth="1.500" /><path d="M7 3.800h6M1 10.200h6" strokeWidth="1.600" /><circle cx="10.500" cy="10.200" r="1.600" strokeWidth="1.500" /></Svg>
            </div>
            <div className="ml-2 flex w-[1522px] text-[14px]">
              <Fit w={127.5}>teams.microsoft.com</Fit>
              <Fit w={1384} className="text-[#5f6a6b]">{'/v2/?meetingjoin=true#/l/meetup-join/19:meeting_NDM4YzJhNjQtMGFlMC00N2EyLWJiOGQtZTliN2M0MGU0MTc1@thread.v2/0?context=%7b"Tid"%3a"66c5be6d-b895-4170-9fe4-1d29253008f0"%2c"Oid"%3a"733c5b4e-7...'}</Fit>
            </div>
            <MdMicNone className="ml-[2px] h-[18px] w-[18px] text-[#4f5657]" />
            <MdStarOutline className="ml-[13px] h-[19px] w-[19px] text-[#3f4647]" />
          </div>
          <MdOutlineExtension className="ml-[17px] h-[20px] w-[20px]" />
          <i className="ml-[15px] h-4 w-[2px] bg-[#5cb8c2]" />
          <Svg s={16} vb="0 0 16 16" className="ml-[18px]"><path d="M1.500 1.500h13v13h-13z" strokeWidth="2" /><path d="M9 1.500h5.500v13H9z" fill="currentColor" /></Svg>
          <span className="ml-[18px] flex h-5 w-5 items-center justify-center rounded-full bg-[#ab47bc] text-[10px] text-white">K</span>
          <MdMoreVert className="ml-[17px] h-[18px] w-[18px]" />
        </div>
      </div>

      {/* notification prompt */}
      <div className="flex h-[36px] shrink-0 items-center border-b border-[#d8d8d8] bg-[#e5e5e5]">
        <div className="w-[767px]" />
        <Fit w={292} className="pt-[2px] text-[13.500px] text-[#363636]">Stay in the know. Turn on desktop notifications.</Fit>
        <div className="ml-auto flex h-6 w-[72px] items-center justify-center rounded-[4px] border border-[#cfcfcf] bg-white"><Fit w={42} className="pt-[2px] text-[12.500px] font-medium">Turn on</Fit></div>
        <Svg s={12} vb="0 0 12 12" className="mr-[9px] ml-[13px] text-[#444]"><path d="m1 1 10 10M11 1 1 11" /></Svg>
      </div>

      {/* meeting controls */}
      <div className="flex h-[61px] shrink-0 items-center border-b border-[#dcdcdc] bg-white text-[#3a3a3a]">
        <Svg s={18} className="ml-[19px]"><path d="M10 1.500c2.500 1.800 4.800 2.300 7.300 2.400v5.600c0 4.500-2.700 7.500-7.300 9.200-4.600-1.700-7.300-4.700-7.300-9.200V3.900C5.200 3.800 7.500 3.300 10 1.500z" strokeWidth="1.200" /></Svg>
        <svg className="ml-[15px]" width="17" height="17" viewBox="0 0 17 17"><circle cx="8.500" cy="8.500" r="7.500" fill="none" stroke="#424242" strokeWidth="1.600" /><circle cx="8.500" cy="8.500" r="5" fill="#d13438" /></svg>
        <Fit w={33} className="ml-[11px] text-[13.500px]">05:01</Fit>
        <div className="mt-[2px] ml-auto flex">
          {actions.map(([Icon, label, w]) => (
            <div key={label} className="flex w-14 flex-col items-center">
              <div className="flex h-[22px] items-center gap-[3px]"><Icon />{label === "People" && <Fit w={14} className="text-[13px] font-medium">70</Fit>}</div>
              <Fit w={w} className="mt-[3px] text-[11.500px] leading-[16px]">{label}</Fit>
            </div>
          ))}
          <i className="mx-[8px] h-8 w-px self-center bg-[#d8d8d8]" />
          <div className="flex w-14 flex-col items-center text-[#bdbdbd]"><div className="flex h-[22px] items-center"><CamI /></div><Fit w={37} className="mt-[3px] text-[11.500px] leading-[16px]">Camera</Fit></div>
          <div className="flex w-14 flex-col items-center"><div className="flex h-[22px] items-center text-[#242424]"><MicOffI /></div><Fit w={18} className="mt-[3px] text-[11.500px] leading-[16px]">Mic</Fit></div>
          <div className="flex w-14 flex-col items-center"><div className="flex h-[22px] items-center text-[#242424]"><ShareI /></div><Fit w={27} className="mt-[3px] text-[11.500px] leading-[16px]">Share</Fit></div>
        </div>
        <div className="mr-[20px] ml-[10px] flex h-8 w-[92px] items-center rounded-[4px] bg-[#d13438] pl-[15px] text-white">
          <svg width="20" height="12" viewBox="0 0 20 12"><path d="M10 1.500c4.500 0 9 1.800 9 5.500 0 1.500-.5 2.500-1.700 2.300l-2.800-.5c-1-.2-1.200-1-1.200-2V5.300c-2-.8-4.600-.8-6.600 0v1.500c0 1-.2 1.800-1.200 2l-2.800.5C1.500 9.500 1 8.500 1 7c0-3.700 4.500-5.500 9-5.500z" fill="currentColor" /></svg>
          <Fit w={36} className="ml-[8px] text-[13.500px] font-semibold">Leave</Fit>
        </div>
      </div>

      {/* stage */}
      <div className="relative flex h-[848px] shrink-0">
        <div className="mt-[4px] ml-[92px] flex h-[839px] w-[1492px] shrink-0 flex-col overflow-hidden bg-[#f3f3f3]">
          {/* title bar */}
          <div className="flex h-[23px] shrink-0 items-center bg-gradient-to-r from-[#f8efea] from-45% to-[#f9f1e4] to-46% pl-[3px] text-[#1f1f1f]">
            <WriterIcon w={12} h={15} />
            <Fit w={183} className="ml-[6px] text-[12px]">MVC DEMO.odt - LibreOffice Writer</Fit>
            <div className="mr-[2px] ml-auto flex">
              <Svg s={46} vb="-23 -23 46 46" className="-my-3"><path d="M-4.500-.500h9" strokeWidth="1.200" /></Svg>
              <Svg s={46} vb="-23 -23 46 46" className="-my-3"><rect x="-4.500" y="-2.500" width="7" height="7" rx="1.500" strokeWidth="1.200" /><path d="M-2-4.500h4.500a2 2 0 0 1 2 2v4.500" strokeWidth="1.200" /></Svg>
              <Svg s={46} vb="-23 -23 46 46" className="-my-3"><path d="m-4.500-4.500 9 9m0-9-9 9" strokeWidth="1.200" /></Svg>
            </div>
          </div>
          {/* menus and toolbars */}
          <div className="flex h-[81px] shrink-0 flex-col border-b-2 border-[#cfcfcf] bg-gradient-to-b from-white to-[#f1f1f1]">
            <div className="flex h-[22px] items-center pl-[8px] text-[12px] text-[#222]">
              {menus.map(([m, w, cls, u = 0]) => <div key={m} className={cls}><Fit w={w}>{m.slice(0, u)}<span className="underline underline-offset-2">{m[u]}</span>{m.slice(u + 1)}</Fit></div>)}
            </div>
            <div className="flex h-[27px] items-center"><i className="mr-[5px] ml-[2px] h-[18px] border-l-2 border-dotted border-[#aaa]" />{renderTools(toolbar1)}</div>
            <div className="mt-[4px] flex h-[26px] items-center">
              <i className="mr-[5px] ml-[2px] h-[18px] border-l-2 border-dotted border-[#aaa]" />
              <Combo w="w-[117px]" tw={68}>Default Style</Combo>
              <Tool n="Aupd" /><Tool n="Aplus" /><Sep />
              <Combo w="w-[116px]" tw={82}>Liberation Serif</Combo>
              <i className="w-[7px]" />
              <Combo w="w-[43px]" tw={15}>12</Combo><Sep />
              <Tool node={<b className="text-[20px] leading-none text-[#555]">B</b>} />
              <Tool node={<i className="font-['Liberation_Serif',serif] text-[20px] leading-none text-[#666]">I</i>} />
              {renderTools(["under", "strike", "|"])}
              <Tool node={<span className="text-[18px] leading-none text-[#666]">x<sup className="-top-[7px] text-[10px] font-semibold text-[#3f74b8]">2</sup></span>} />
              <Tool node={<span className="-mt-[3px] text-[18px] leading-none text-[#666]">x<sub className="-bottom-[3px] text-[10px] font-semibold text-[#3f74b8]">2</sub></span>} />
              {renderTools(["|", "Aclear", "|", "Acol+", "hl+", "|", "bul+", "num+*"])}
              <i className="w-[5px]" />
              {renderTools(["left*", "center", "right", "just", "|", "lsp+", "psp", "pspd", "|", "ind", "indd"])}
            </div>
          </div>
          {/* document */}
          <div className="flex h-[638px] shrink-0">
            <div className="h-full w-[1469px] overflow-hidden bg-[#dfdfdf]">
              <div className="flex pt-[3px]">
                <svg width="117" height="20" viewBox="0 0 117 20"><path d="M8 6v4.500h5" stroke="#777" strokeWidth="2" fill="none" /></svg>
                <Ruler />
              </div>
              <div className="mt-[27px] ml-[117px] h-[600px] w-[1235px] border border-[#c2c2c2] bg-white font-['Liberation_Serif',serif] text-[#0d0d0d] shadow-[2px_2px_2px_#c4c4c4]">
                <div className="flex justify-between pt-[96px] pr-[96px] pl-[97px]">
                  <i className="h-[21px] w-[21px] border-r border-b border-[#c8c8c8]" />
                  <i className="h-[21px] w-[21px] border-b border-l border-[#c8c8c8]" />
                </div>
                <div className="pt-[1.500px] pl-[118px]">
                  <H w={497}>We can implement partial view as below types:</H>
                  <Li n="1"><Fit w={121}><Sq>Html.Partial</Sq></Fit></Li>
                  <Li n="2">
                    <Fit w={57}><Sq>Html.</Sq></Fit>
                    <span className="relative h-[28px] bg-[#b9d9f4] text-[#14304a] outline outline-[#4d9ade]">
                      <Fit w={136}><Sq>RenderPartial</Sq></Fit>
                      <svg className="absolute top-[4px] left-[46px]" width="8" height="18" viewBox="0 0 8 18"><path d="M1 .500h2l1 1 1-1h2M4 1.500v15M1 17.500h2l1-1 1 1h2" stroke="#555" fill="none" /></svg>
                    </span>
                  </Li>
                  <Li n="3"><Fit w={215}>jQuery Load function</Fit></Li>
                  <Li n="4"><Fit w={221}>Loads data using Ajax</Fit></Li>
                  <div className="h-[28.600px]" />
                  <H w={151}><Sq>Html.Partial</Sq>:-</H>
                  <div className="h-[2.300px]" />
                  <L ind w={879}>It renders _address partial view as HTML encoded string. The returned HTML encoded string can be</L>
                  <L w={156}>stored in variable.</L>
                  <div className="h-[25px]" />
                  <L ind w={893}>The <Sq>@Html.Partial(</Sq>) method renders the specified partial view. It accepts partial view name as a string</L>
                  <L w={984}>parameter and returns <Sq>MvcHtmlString</Sq>. It returns an HTML string, so you have a chance of modifying the HTML</L>
                  <L w={149}>before rendering.</L>
                  <div className="h-[29px]" />
                  <H w={230}><Sq>Html.RenderPartial</Sq>:-</H>
                  <div className="h-[2.300px]" />
                  <L ind w={889}>The <Sq>@html.RenderPartial(</Sq>) method is the same as the <Sq>@html.Partial(</Sq>) method except that it writes the</L>
                  <div className="flex h-[25px] text-[22px] leading-[25px]"><span className="w-[718px]"><Fit w={312}>resulted HTML of a specified partial</Fit></span><Fit w={265}>So, you can modify it's HTML</Fit></div>
                </div>
              </div>
            </div>
            <div className="h-full w-[17px] bg-[#efefef] pt-[17px] pl-[7px]"><div className="h-[103px] w-[5px] bg-[#868686]" /></div>
            <div className="flex h-full w-[6px] items-center border-l border-[#b5b5b5] bg-[#f1f1f3]">
              <div className="-ml-px flex h-[57px] w-[6px] items-center justify-center bg-[#696969]"><i className="border-y-[3px] border-r-[4px] border-y-transparent border-r-white" /></div>
            </div>
          </div>
          {/* list toolbar */}
          <div className="flex h-[31px] shrink-0 items-center border-y border-[#bfbfbf] bg-[#f1f1f2] pb-px opacity-90">
            <i className="mr-[5px] ml-[2px] h-[18px] border-l-2 border-dotted border-[#aaa]" />
            {renderTools(["ind", "indd", "ind", "indd", "|", "mv", "mvu", "mv", "mvu", "|", "tl", "num", "|", "numnew"])}
          </div>
          {/* status bar */}
          <div className="flex h-[20px] shrink-0 items-center bg-[#f2f1f2] pt-px text-[12px] text-[#222]">
            <div className="w-[210px] pl-[9px]"><Fit w={59}>Page 1 of 2</Fit></div><VSep />
            <div className="w-[315px] pl-[8px]"><Fit w={159}>1 words, 13 characters selected</Fit></div><VSep />
            <div className="w-[211px] pl-[8px]"><Fit w={65}>Default Style</Fit></div><VSep />
            <div className="flex w-[223px] justify-center"><Fit w={73}>English (India)</Fit></div><VSep />
            <div className="w-[54px]" /><VSep />
            <div className="flex w-[23px] justify-center"><Svg s={15} className="text-[#777]"><path d="M1 7h9v6H1zM13 3h5M15.500 3v14M13 17h5" strokeWidth="1.300" /></Svg></div><VSep />
            <div className="flex w-[23px] justify-center"><Svg s={10} className="text-[#d98a98]"><path d="M1 1h18v18H1zM6 1v6h8V1M5 19v-7h10v7" strokeWidth="2" /></Svg></div><VSep />
            <div className="w-[23px]" /><VSep />
            <div className="flex w-[186px] justify-center"><Fit w={35}>Level 1</Fit></div><VSep />
            <div className="flex w-[60px] justify-center">
              <svg width="44" height="10" viewBox="0 0 44 10" fill="none" stroke="#777"><path d="M1 .500h4l2.500 3v6H1zM12 .500h4l2.500 3v6H12zM20 .500h4l2.500 3v6H20zM33 .500h3.500v9H31V2.500zM36.500.500H41l2 2v7h-6.500z" /></svg>
            </div><VSep />
            <svg className="ml-[3px]" width="108" height="12" viewBox="0 0 108 12" stroke="#666" fill="none"><path d="M3 6h7M15 6h77M29.500 3.500v5M51.500 3.500v5M95 6h8M99 2v8" strokeWidth="1.300" /><path d="M56.500 1.500v9" strokeWidth="3" /></svg>
            <VSep />
            <Fit w={27} className="ml-[6px]">160%</Fit>
          </div>
          {/* presenter's taskbar */}
          <div className="flex h-[46px] shrink-0 bg-[#222223] text-white">
            <div className="w-[532px] pt-[7px] pl-[27px] text-[11.500px] leading-[16px] text-[#b8b8b8]"><Fit w={22}>87°F</Fit><br /><Fit w={66} className="text-[#777]">Partly cloudy</Fit></div>
            <div className="flex">
              <TaskItem w="w-[43px]"><WinLogo s={23} /></TaskItem>
              <TaskItem w="w-[43px]"><TaskView dark /></TaskItem>
              <TaskItem w="w-[43px]" dot><Explorer /></TaskItem>
              <TaskItem w="w-[43px]" dot><VS /></TaskItem>
              <TaskItem w="w-[42px]"><Npp /></TaskItem>
              <TaskItem w="w-[43px]"><TeamsLogo s={24} /></TaskItem>
              <TaskItem w="w-[43px]" dot><Edge /></TaskItem>
              <TaskItem w="w-[43px]" active="bg-[#4cb4f0]" bg="h-[38px] w-[38px] bg-[#2c2c2e]"><WriterIcon /></TaskItem>
              <TaskItem w="w-[42px]" dot><Skype /></TaskItem>
              <TaskItem w="w-[43px]" dot><Pg light /></TaskItem>
            </div>
            <div className="ml-auto flex items-center pr-[20px]">
              <Up />
              <svg className="ml-[17px]" width="18" height="18" viewBox="0 0 18 18" fill="none" stroke="#ddd" strokeWidth="1.300"><path d="M2 6.500C4 2.500 10 0 15.500 5M16 1v4.500h-4.500M8 16C4 16 2 13 1.500 10.500M1 15v-4.500h4.500" /><circle cx="13" cy="12.500" r="4.300" fill="#ff9a1a" stroke="none" /></svg>
              <span className="ml-[13px] text-[#86b9c9]"><MicI /></span>
              <div className="ml-[16px] w-[24px] text-center text-[11.500px] leading-[15.500px]"><Fit w={22}>ENG</Fit><Fit w={24}>INTL</Fit></div>
              <Svg s={17} className="ml-[16px]"><path d="M1 7.500c5-5 13-5 18 0M4 10.500c3.500-3.500 8.500-3.500 12 0M7 13.500c2-2 4-2 6 0" strokeWidth="1.600" /><circle cx="10" cy="16" r="1.300" fill="currentColor" /></Svg>
              <span className="ml-[6px]"><Vol /></span>
              <svg className="ml-[6px]" width="18" height="14" viewBox="0 0 18 14" fill="none" stroke="#fff" strokeWidth="1.200"><path d="M6 3h8.500v9H2V8" /><path d="M15 6h1.500v3H15" /><path d="M6 5h5v5.500H4V8z" fill="#fff" stroke="none" /><path d="M2 0v3m3-3v3M.800 3h5.500c0 3-1 4-2.700 4S.800 6 .800 3z" fill="#fff" /></svg>
              <div className="ml-[14px] flex w-[60px] flex-col items-end text-[11.500px] leading-[15.500px]"><Fit w={27}>10:37</Fit><Fit w={60}>28-02-2024</Fit></div>
              <Bell className="ml-[8px] text-[#7fd4f7]" />
            </div>
          </div>
        </div>

        {/* screen-sharing notice */}
        <div className="absolute top-[715px] left-[634px] flex h-[42px] w-[408px] items-center border border-[#6d6d6d] bg-[#4e4e4e] text-white shadow-[0_6px_10px_rgba(0,0,0,0.25)]">
          <i className="ml-[9px] h-[11px] w-[5px] border-x-[1.500px] border-[#ddd]" />
          <Fit w={224} className="ml-[11px] pt-px text-[12px]">teams.microsoft.com is sharing your screen.</Fit>
          <div className="ml-[9px] flex h-[31px] w-[98px] items-center justify-center rounded-[3px] bg-[#0567c6]"><Fit w={66} className="pt-px text-[12px] font-semibold">Stop sharing</Fit></div>
          <Fit w={25} className="ml-[12px] pt-px text-[12px] text-[#7db3e0] underline underline-offset-2">Hide</Fit>
        </div>

        {/* presenter tag and zoom */}
        <div className="absolute top-[811px] left-[13px] flex h-6 gap-2 text-white">
          <div className="flex w-[140px] items-center rounded-[4px] bg-black/50 pl-[6px]"><Fit w={128} className="pt-px text-[11.500px] font-semibold">Bhavik Shah (Unverified)</Fit></div>
          <div className="flex w-[66px] items-center justify-around rounded-[4px] bg-black/50">
            <Svg s={13} vb="0 0 13 13" className="text-[#6a6a6a]"><path d="M.500 6.500h12" /></Svg>
            <Svg s={13} vb="0 0 13 13"><path d="M.500 6.500h12M6.500.500v12" /></Svg>
          </div>
        </div>

        {/* participants */}
        <div className="relative flex-1">
          <div className="mt-[31px] ml-[101px] grid w-[220px] grid-cols-2">
            {people.map(([ini, cls, name, w], i) => (
              <div key={i} className="relative flex h-[110px] flex-col items-center">
                {ini === "BS" && <><i className="pointer-events-none absolute -top-[65px] h-[200px] w-[200px] rounded-full bg-[radial-gradient(circle,rgba(91,95,199,0.16)_30%,rgba(91,95,199,0.07)_45%,rgba(91,95,199,0.02)_59%,rgba(91,95,199,0)_70%)]" /><i className="absolute -top-[5px] h-20 w-20 rounded-full border-[4px] border-[#5b5fc7] bg-[#e9eef5]" /></>}
                <div className={"relative flex h-[70px] w-[70px] items-center justify-center rounded-full text-[26px] font-semibold shadow-[0_1px_3px_rgba(0,0,0,0.18)] " + cls}>
                  {ini === "" ? <PeopleI s={38} sw={0.9} /> : ini === "..." ? <Svg s={22}><g fill="currentColor" stroke="none"><circle cx="3" cy="10" r="1.800" /><circle cx="10" cy="10" r="1.800" /><circle cx="17" cy="10" r="1.800" /></g></Svg> : <Fit w={ini.length === 1 ? 19 : ini === "DP" ? 36 : ini === "FT" || ini === "JP" ? 29 : 32}>{ini}</Fit>}
                </div>
                <div className={"relative mt-[9px] flex h-4 w-[94px] items-center text-[11.500px] text-[#333] " + (ini === "..." ? "justify-center" : "justify-between")}>
                  <Fit w={w}>{name}</Fit>
                  {ini !== "..." && ini !== "BS" && <span className="-mt-[2px] mr-[2px]"><MicOffI s={13} /></span>}
                </div>
              </div>
            ))}
          </div>
          <div className="mt-[19px] ml-[90px] flex h-[133px] w-[241px] items-center justify-center bg-[#e5e5e5]">
            <div className="flex h-14 w-14 items-center justify-center rounded-full bg-[#d0e1d7] text-[21px] font-semibold text-[#1c4a32]">K</div>
          </div>
          <div className="absolute top-[753px] left-[15px] flex flex-col items-start text-[#b3b3b3]">
            <Fit w={157} className="text-[19px] leading-[26px]">Activate Windows</Fit>
            <Fit w={236} className="text-[14.500px] leading-[19px]">Go to Settings to activate Windows.</Fit>
          </div>
        </div>
      </div>

      {/* taskbar */}
      <div className="flex h-[48px] shrink-0 items-center border-t border-[#b4b4b4] bg-[#dadada]">
        <svg className="ml-[10px]" width="24" height="22" viewBox="0 0 24 22"><rect width="24" height="22" rx="1.500" fill="#0f5aa8" /><rect x="2" y="2" width="9" height="18" rx="1" fill="#f4f4f4" /><rect x="13" y="2" width="9" height="10" fill="#62cdf8" /><rect x="13" y="12" width="9" height="4" fill="#2a9df0" /><rect x="13" y="16" width="9" height="4" fill="#0b7ae0" /></svg>
        <div className="ml-[517px]"><WinLogo s={23} /></div>
        <div className="ml-[14px] flex h-8 w-[218px] items-center rounded-full border border-[#c9c9c9] bg-[#f4f4f4]">
          <Svg s={16} className="ml-[9px] text-[#222]"><circle cx="9" cy="8.500" r="6.800" strokeWidth="2" /><path d="m13.500 13.500 5 5" strokeWidth="2" /></Svg>
          <Fit w={41} className="ml-[10px] text-[13.500px] text-[#5c5c5c]">Search</Fit>
          <svg className="ml-auto" width="21" height="21" viewBox="0 0 21 21" fill="none"><path d="M6 5l5-4 4 4-4 7-3-1z" fill="#b8a9cc" /><path d="M7 8c-5 2-4 9 1 10" stroke="#a79abb" strokeWidth="2.500" /><path d="M2 19h18" stroke="#b8a9cc" strokeWidth="3" /><path d="m10 16 8-6" stroke="#3fa9e8" strokeWidth="1.500" /></svg>
          <svg className="mr-[5px] ml-[4px]" width="22" height="22" viewBox="0 0 22 22"><path d="m10 2 9-1.500 2.500 6L13 9zM1 14l7-2 4 7-9 2z" fill="#3a2d63" /><path d="m7 7 5-2 5 5-5 6-5-4z" fill="#8864b8" /><path d="M1 8l6 3M14 14l6 3M3 4l5 4" stroke="#8864b8" strokeWidth="2" /></svg>
        </div>
        <div className="ml-[2px] flex h-full">
          <TaskItem w="w-[44px]"><TaskView /></TaskItem>
          <TaskItem w="w-[45px]"><TeamsWhite /></TaskItem>
          <TaskItem w="w-[44px]" dot><Explorer /></TaskItem>
          <TaskItem w="w-[44px]" dot><Edge /></TaskItem>
          <TaskItem w="w-[44px]"><Store /></TaskItem>
          <TaskItem w="w-[44px]"><Chrome /></TaskItem>
          <TaskItem w="w-[44px]" dot><Photos /></TaskItem>
          <TaskItem w="w-[44px]" dot><VSCode /></TaskItem>
          <TaskItem w="w-[44px]" active="bg-[#0a6fd0]" bg="h-[38px] w-[38px] bg-[#efefef]"><Chrome badge /></TaskItem>
          <TaskItem w="w-[44px]" dot><Pg /></TaskItem>
          <TaskItem w="w-[44px]" dot><Notepad /></TaskItem>
          <TaskItem w="w-[44px]" dot><VS /></TaskItem>
          <TaskItem w="w-[44px]" dot><Skype /></TaskItem>
        </div>
        <div className="ml-auto flex items-center pr-[20px] text-[#1d1d1d]">
          <Up />
          <span className="ml-[17px] text-[#0a55b0]"><MicI /></span>
          <div className="ml-[18px] w-[24px] text-center text-[11.500px] leading-[16px]"><Fit w={23}>ENG</Fit><Fit w={12}>IN</Fit></div>
          <svg className="ml-[17px]" width="18" height="17" viewBox="0 0 18 17" fill="none" stroke="currentColor" strokeWidth="1.200"><path d="M12 1.500H2.500A1.500 1.500 0 0 0 1 3v8.500A1.500 1.500 0 0 0 2.500 13H12M5 16h8M7 13v3M10.500 13v3M12.500 1.500h4v4h-4zM14.500 5.500v7.500" /></svg>
          <span className="ml-[6px]"><Vol /></span>
          <div className="ml-[13px] flex w-[65px] flex-col items-end text-[11.500px] leading-[16px]"><Fit w={28}>10:37</Fit><Fit w={62}>28-02-2024</Fit></div>
          <Bell className="ml-[8px] text-[#0a4fa8]" />
        </div>
      </div>
    </div>
  );
}
